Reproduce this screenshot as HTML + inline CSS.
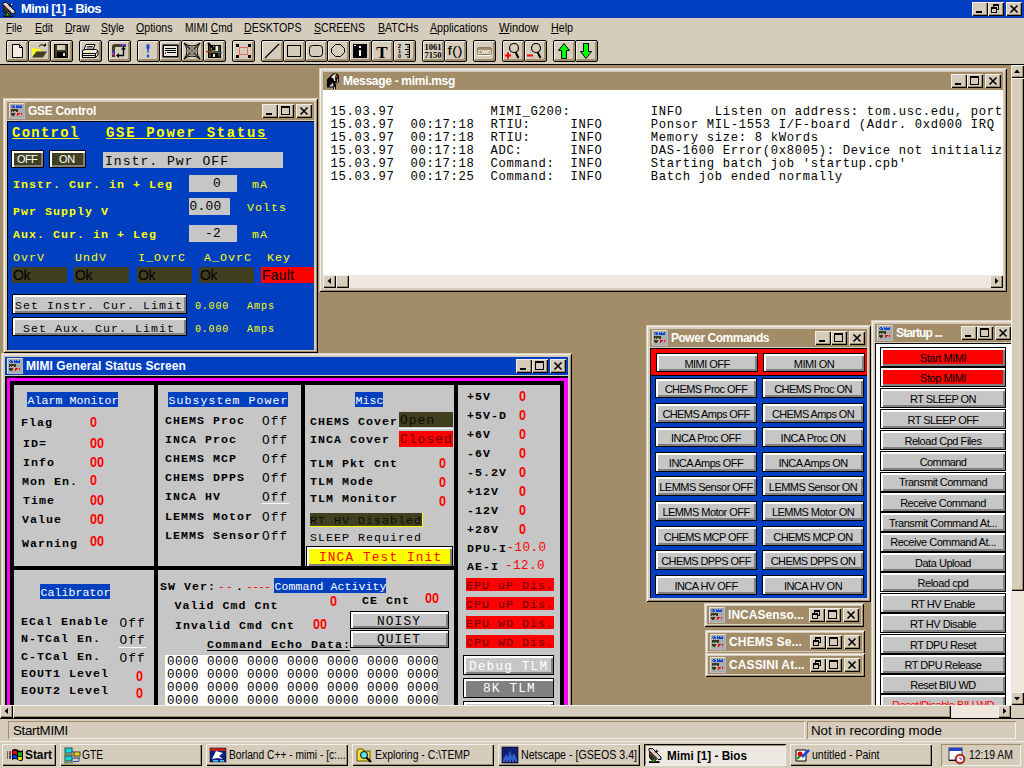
<!DOCTYPE html><html><head><meta charset="utf-8"><title>Mimi [1] - Bios</title><style>
html,body{margin:0;padding:0;}
body{width:1024px;height:768px;overflow:hidden;background:#A28D68;position:relative;font-family:"Liberation Sans",sans-serif;font-size:13px;color:#000;}
div{position:absolute;box-sizing:border-box;}
.t{white-space:pre;line-height:1;}
.win{background:#D5CCBB;box-shadow:inset 1px 1px #D5CCBB,inset -1px -1px #000,inset 2px 2px #F3EFE8,inset -2px -2px #A28D68;}
.tb{height:18px;color:#fff;font-weight:bold;font-size:12px;}
.cb{width:16px;height:14px;background:#D5CCBB;box-shadow:inset 1px 1px #F3EFE8,inset -1px -1px #000,inset -2px -2px #A28D68;}
.tbtn{width:23px;height:22px;background:#D5CCBB;border:1px solid #000;border-radius:2px;box-shadow:inset 1px 1px #F3EFE8,inset -2px -2px #A28D68;}
.mono{font-family:"Liberation Mono",monospace;}
.mb{font-family:"Liberation Mono",monospace;font-weight:bold;}
.y{color:#FFFF00;}
.r{color:#FF0000;}
.pbtn{background:#C6C6C6;border:1px solid #000;box-shadow:inset 2px 2px #fff,inset -2px -2px #808080;text-align:center;font-size:12px;white-space:pre;}
.sunk{box-shadow:inset 1px 1px #A28D68,inset -1px -1px #F3EFE8;}
.task{height:22px;background:#D5CCBB;box-shadow:inset 1px 1px #F3EFE8,inset -1px -1px #000,inset -2px -2px #A28D68;font-size:12px;white-space:pre;}
svg{position:absolute;left:0;top:0;overflow:visible;}
</style></head><body><div style="left:0px;top:0px;width:1024px;height:18px;background:#0040C0;"></div><svg width="18" height="18" style="left:0px;top:0px"><path d="M3 2.5 L6.5 2.5 L15 11 L15 13.5 L12 13.5 L3 4.5Z" fill="#D8D4CC" stroke="#000" stroke-width="1"/><path d="M3.5 5.5 L10.5 13 L9.5 14.5 L6 14.5 L3.5 11.5Z" fill="#505028" stroke="#000" stroke-width=".8"/><path d="M4 9 L8 13.5 M4 11.5 L6.5 14" stroke="#000" stroke-width="1"/><path d="M9.5 6.5 L12 4" stroke="#000" stroke-width="2.4"/><circle cx="11.6" cy="4.4" r=".8" fill="#fff"/><path d="M3 16 H13.500" stroke="#000" stroke-width="2"/><path d="M4 15.700 H12" stroke="#505028" stroke-width=".8"/><rect x="6.700" y="13.700" width="1.600" height="1.600" fill="#00FF00"/><rect x="3.800" y="6.800" width="1.500" height="1.500" fill="#FF0000"/></svg><div class="t" style="left:21px;top:2px;font:bold 13px 'Liberation Sans',sans-serif;line-height:13px;letter-spacing:-0.59px;color:#fff;">Mimi [1] - Bios</div><div class="cb" style="left:972px;top:2px;width:16px;height:14px;"><div style="left:4px;top:9px;width:6px;height:2px;background:#000"></div></div><div class="cb" style="left:988px;top:2px;width:16px;height:14px;"><div style="left:5px;top:2px;width:6px;height:6px;border:1px solid #000;border-top:2px solid #000"></div><div style="left:3px;top:5px;width:6px;height:6px;border:1px solid #000;border-top:2px solid #000;background:#D5CCBB"></div></div><div class="cb" style="left:1006px;top:2px;width:16px;height:14px;"><svg width="16" height="14"><path d="M4.5 3.5 L11.5 10.5 M11.5 3.5 L4.5 10.5" stroke="#000" stroke-width="1.6" fill="none"/></svg></div><div style="left:0px;top:18px;width:1024px;height:46px;background:#D5CCBB;"></div><div class="t" style="left:6px;top:22px;font:12.5px 'Liberation Sans',sans-serif;line-height:12.5px;transform-origin:0 0;transform:scaleX(0.794);"><u>F</u>ile</div><div class="t" style="left:34.5px;top:22px;font:12.5px 'Liberation Sans',sans-serif;line-height:12.5px;transform-origin:0 0;transform:scaleX(0.836);"><u>E</u>dit</div><div class="t" style="left:64.5px;top:22px;font:12.5px 'Liberation Sans',sans-serif;line-height:12.5px;transform-origin:0 0;transform:scaleX(0.840);"><u>D</u>raw</div><div class="t" style="left:101px;top:22px;font:12.5px 'Liberation Sans',sans-serif;line-height:12.5px;transform-origin:0 0;transform:scaleX(0.828);"><u>S</u>tyle</div><div class="t" style="left:136px;top:22px;font:12.5px 'Liberation Sans',sans-serif;line-height:12.5px;transform-origin:0 0;transform:scaleX(0.847);"><u>O</u>ptions</div><div class="t" style="left:184.5px;top:22px;font:12.5px 'Liberation Sans',sans-serif;line-height:12.5px;transform-origin:0 0;transform:scaleX(0.824);">MIMI <u>C</u>md</div><div class="t" style="left:244px;top:22px;font:12.5px 'Liberation Sans',sans-serif;line-height:12.5px;transform-origin:0 0;transform:scaleX(0.847);"><u>D</u>ESKTOPS</div><div class="t" style="left:314px;top:22px;font:12.5px 'Liberation Sans',sans-serif;line-height:12.5px;transform-origin:0 0;transform:scaleX(0.844);"><u>S</u>CREENS</div><div class="t" style="left:377.5px;top:22px;font:12.5px 'Liberation Sans',sans-serif;line-height:12.5px;transform-origin:0 0;transform:scaleX(0.849);"><u>B</u>ATCHs</div><div class="t" style="left:430px;top:22px;font:12.5px 'Liberation Sans',sans-serif;line-height:12.5px;transform-origin:0 0;transform:scaleX(0.853);"><u>A</u>pplications</div><div class="t" style="left:499px;top:22px;font:12.5px 'Liberation Sans',sans-serif;line-height:12.5px;transform-origin:0 0;transform:scaleX(0.888);"><u>W</u>indow</div><div class="t" style="left:550.5px;top:22px;font:12.5px 'Liberation Sans',sans-serif;line-height:12.5px;transform-origin:0 0;transform:scaleX(0.856);"><u>H</u>elp</div><div style="left:0px;top:64px;width:1024px;height:1px;background:#000;"></div><div class="tbtn" style="left:6px;top:40px;width:23px;height:22px;"><svg width="22" height="22" style="left:-1px;top:-1px"><path d="M6.5 4.5 H13.5 L16.5 7.5 V17.5 H6.5Z" fill="#F2ECE2" stroke="#000"/><path d="M13.5 4.5 V7.5 H16.5" fill="none" stroke="#000"/></svg></div><div class="tbtn" style="left:28px;top:40px;width:23px;height:22px;"><svg width="22" height="22" style="left:-1px;top:-1px"><path d="M4 8 L9 9 L13 9 L13 11 L8 11 L4 16Z" fill="#FFFF00"/><path d="M4 17.5 L8.5 11.5 H19 L15 17.5Z" fill="#404020"/><path d="M11 6.5 Q14 3 17 6.5" fill="none" stroke="#000"/><path d="M15 6 H18 V3Z" fill="#000"/></svg></div><div class="tbtn" style="left:50px;top:40px;width:23px;height:22px;"><svg width="22" height="22" style="left:-1px;top:-1px"><rect x="4.5" y="4.5" width="13" height="13" fill="#404020" stroke="#000"/><rect x="7" y="5" width="8" height="5" fill="#D5CCBB"/><rect x="7" y="12" width="9" height="5" fill="#000"/><rect x="13" y="13" width="2" height="3" fill="#E8E0D0"/></svg></div><div class="tbtn" style="left:79px;top:40px;width:23px;height:22px;"><svg width="22" height="22" style="left:-1px;top:-1px"><path d="M7 4.5 H16 L14 9.5 H5Z" fill="#fff" stroke="#000"/><path d="M8 6.5 H14 M7.5 8 H13.5" stroke="#000" stroke-width=".8"/><path d="M3.5 10.5 L6 9.5 H17 L19 11 V15 L16.5 17.5 H3.5Z" fill="#F2ECE2" stroke="#000"/><path d="M3.5 13.5 H16.5 L19 11.5 M16.5 13.5 V17.5" fill="none" stroke="#000"/><rect x="9" y="12" width="3" height="1" fill="#FFFF00"/><path d="M4 15.5 H16" stroke="#000"/></svg></div><div class="tbtn" style="left:108px;top:40px;width:23px;height:22px;"><svg width="22" height="22" style="left:-1px;top:-1px"><path d="M4 17 V7 Q4 4 7 4 H18 V7 H8 Q7 7 7 8 V17Z" fill="#404020"/><rect x="12" y="4" width="2" height="2" fill="#2040E0"/><rect x="14" y="4" width="2" height="2" fill="#E020C0"/><rect x="16" y="4" width="2" height="2" fill="#2040E0"/><rect x="4" y="11" width="2" height="2" fill="#2040E0"/><rect x="4" y="13" width="2" height="2" fill="#E020C0"/><path d="M10 15.5 H15.5 V9" fill="none" stroke="#000" stroke-width="1.4"/><path d="M8 15.5 L11 13 V18Z M15.5 6.5 L13 9.5 H18Z" fill="#000"/></svg></div><div class="tbtn" style="left:137px;top:40px;width:23px;height:22px;"><svg width="22" height="22" style="left:-1px;top:-1px"><path d="M9.500 5 Q11 3 12.500 5 V8 Q11.500 9 11.500 13 H10.500 Q10.500 9 9.500 8Z" fill="#1048E0"/><path d="M11 14 L12.500 16 L11 18 L9.500 16Z" fill="#1048E0"/></svg></div><div class="tbtn" style="left:159px;top:40px;width:23px;height:22px;"><svg width="22" height="22" style="left:-1px;top:-1px"><rect x="4.2" y="5.200" width="14.600" height="11.600" fill="#EDE8DF" stroke="#000" stroke-width="1.500"/><path d="M6 8.5 H17 M6 10.5 H17 M8 12.5 H17" stroke="#000"/><rect x="6" y="12" width="1" height="2" fill="#F00"/></svg></div><div class="tbtn" style="left:181px;top:40px;width:23px;height:22px;"><svg width="22" height="22" style="left:-1px;top:-1px"><path d="M3 3 Q11 9 19 3 Q13 11 19 19 Q11 13 3 19 Q9 11 3 3Z" fill="none" stroke="#000"/><path d="M3 3 L19 19 M19 3 L3 19 M5 4.5 Q11 11 5 17.5 M17 4.5 Q11 11 17 17.5 M4.5 5 Q11 11 17.5 5 M4.5 17 Q11 11 17.5 17 M7 6 Q11 11 7 16 M15 6 Q11 11 15 16 M6 7 Q11 11 16 7 M6 15 Q11 11 16 15" fill="none" stroke="#000" stroke-width=".45"/></svg></div><div class="tbtn" style="left:203px;top:40px;width:23px;height:22px;"><svg width="22" height="22" style="left:-1px;top:-1px"><rect x="5.5" y="5.5" width="12" height="12" fill="#404020" stroke="#000"/><rect x="8" y="6" width="7" height="5" fill="#EDE8DF"/><rect x="8" y="13" width="7" height="4" fill="#000"/><rect x="10" y="14" width="2" height="3" fill="#EDE8DF"/><path d="M5 3 L10 8" stroke="#000" stroke-width="2.2"/><path d="M7 10.5 H12.5 V5Z" fill="#000"/><rect x="3" y="11" width="3" height="1.3" fill="#F00"/><rect x="6" y="11.5" width="10" height="1.3" fill="#606030"/><rect x="16" y="12" width="3" height="1.3" fill="#2060E0"/></svg></div><div class="tbtn" style="left:232px;top:40px;width:23px;height:22px;"><svg width="22" height="22" style="left:-1px;top:-1px"><rect x="4" y="4" width="3" height="3" fill="#000"/><rect x="16" y="4" width="3" height="3" fill="#000"/><rect x="4" y="15" width="3" height="3" fill="#000"/><rect x="16" y="15" width="3" height="3" fill="#000"/><rect x="7.5" y="7.5" width="8" height="7" fill="none" stroke="#F00" stroke-dasharray="1 1"/></svg></div><div class="tbtn" style="left:261px;top:40px;width:23px;height:22px;"><svg width="22" height="22" style="left:-1px;top:-1px"><path d="M4 18 L18 4" stroke="#000" stroke-width="1.2"/></svg></div><div class="tbtn" style="left:283px;top:40px;width:23px;height:22px;"><svg width="22" height="22" style="left:-1px;top:-1px"><rect x="4.500" y="5.500" width="13" height="11" fill="none" stroke="#000"/></svg></div><div class="tbtn" style="left:305px;top:40px;width:23px;height:22px;"><svg width="22" height="22" style="left:-1px;top:-1px"><rect x="4.500" y="5.500" width="13" height="11" rx="3" fill="none" stroke="#000"/></svg></div><div class="tbtn" style="left:327px;top:40px;width:23px;height:22px;"><svg width="22" height="22" style="left:-1px;top:-1px"><path d="M8.500 4.500 H13.500 L17.500 8.500 V12.500 L13.500 16.500 H8.500 L4.500 12.500 V8.500Z" fill="none" stroke="#000"/></svg></div><div class="tbtn" style="left:349px;top:40px;width:23px;height:22px;"><svg width="22" height="22" style="left:-1px;top:-1px"><rect x="4" y="4" width="14" height="14" fill="#000"/><rect x="10" y="6" width="2" height="2" fill="#fff"/><rect x="10" y="10" width="2" height="6" fill="#fff"/><rect x="5" y="5" width="2" height="1" fill="#fff"/></svg></div><div class="tbtn" style="left:371px;top:40px;width:23px;height:22px;"><svg width="22" height="22" style="left:-1px;top:-1px"><text x="11" y="17.500" font-family="Liberation Serif,serif" font-weight="bold" font-size="17" text-anchor="middle" fill="#000">T</text></svg></div><div class="tbtn" style="left:393px;top:40px;width:23px;height:22px;"><svg width="22" height="22" style="left:-1px;top:-1px"><path d="M16.500 4 V18 M12 4.500 H16.500 M14 7 H16.500 M12 9.500 H16.500 M14 12 H16.500 M12 14.500 H16.500 M14 17 H16.500" stroke="#000" fill="none"/><text x="5" y="8" font-family="Liberation Sans,sans-serif" font-weight="bold" font-size="5.500" fill="#000">2</text><text x="5" y="13" font-family="Liberation Sans,sans-serif" font-weight="bold" font-size="5.500" fill="#000">1</text><text x="5" y="18" font-family="Liberation Sans,sans-serif" font-weight="bold" font-size="5.500" fill="#000">0</text></svg></div><div class="tbtn" style="left:422px;top:40px;width:23px;height:22px;"><svg width="22" height="22" style="left:-1px;top:-1px"><text x="11" y="10" font-family="Liberation Serif,serif" font-weight="bold" font-size="8.500" text-anchor="middle" fill="#000" textLength="17" lengthAdjust="spacingAndGlyphs">1061</text><text x="11" y="18" font-family="Liberation Serif,serif" font-weight="bold" font-size="8.500" text-anchor="middle" fill="#000" textLength="17" lengthAdjust="spacingAndGlyphs">7150</text></svg></div><div class="tbtn" style="left:444px;top:40px;width:23px;height:22px;"><svg width="22" height="22" style="left:-1px;top:-1px"><text x="11" y="15" font-family="Liberation Sans,sans-serif" font-size="13" text-anchor="middle" fill="#000" textLength="15" lengthAdjust="spacingAndGlyphs">f()</text></svg></div><div class="tbtn" style="left:473px;top:40px;width:23px;height:22px;"><svg width="22" height="22" style="left:-1px;top:-1px"><rect x="4.500" y="7.500" width="14" height="7" rx="1.500" fill="#A28D68" stroke="#8A7858"/><path d="M5 15.500 H18" stroke="#fff"/><text x="11.500" y="13.500" font-family="Liberation Sans,sans-serif" font-weight="bold" font-size="6" text-anchor="middle" fill="#fff">CMD</text></svg></div><div class="tbtn" style="left:502px;top:40px;width:23px;height:22px;"><svg width="22" height="22" style="left:-1px;top:-1px"><circle cx="12" cy="8" r="4.500" fill="none" stroke="#000" stroke-width="1.2"/><path d="M13.500 12 L16.500 18" stroke="#000" stroke-width="2"/><path d="M3 15.500 H9 M6 12.500 V18.500" stroke="#F00" stroke-width="2"/></svg></div><div class="tbtn" style="left:524px;top:40px;width:23px;height:22px;"><svg width="22" height="22" style="left:-1px;top:-1px"><circle cx="12" cy="8" r="4.500" fill="none" stroke="#000" stroke-width="1.2"/><path d="M13.500 12 L16.500 18" stroke="#000" stroke-width="2"/><path d="M3 15.500 H9" stroke="#F00" stroke-width="2"/></svg></div><div class="tbtn" style="left:553px;top:40px;width:23px;height:22px;"><svg width="22" height="22" style="left:-1px;top:-1px"><path d="M11 3.500 L16.500 10.500 H13.500 V18.500 H8.500 V10.500 H5.500Z" fill="#00FF00" stroke="#000"/></svg></div><div class="tbtn" style="left:575px;top:40px;width:23px;height:22px;"><svg width="22" height="22" style="left:-1px;top:-1px"><path d="M11 18.500 L16.500 11.500 H13.500 V3.500 H8.500 V11.500 H5.500Z" fill="#00FF00" stroke="#000"/></svg></div><div style="left:0;top:0;width:1011px;height:705px;overflow:hidden;"><div class="win" style="left:3px;top:98px;width:315px;height:255px;"></div><div class="tb" style="left:7px;top:102px;width:307px;height:18px;background:#A28D68;"></div><svg width="16" height="16" style="left:9px;top:103px" shape-rendering="crispEdges"><rect width="16" height="16" fill="#B4BAC4"/><rect width="15" height="15" fill="#E6DFD0"/><rect x="1" y="1" width="14" height="14" fill="#ABABAB"/><rect x="3" y="2" width="2" height="1" fill="#1048D8"/><rect x="2" y="3" width="1" height="1" fill="#1048D8"/><rect x="4" y="3" width="2" height="1" fill="#1048D8"/><rect x="3" y="4" width="2" height="1" fill="#1048D8"/><rect x="5" y="3" width="1" height="2" fill="#1048D8"/><rect x="7" y="2" width="1" height="3" fill="#1048D8"/><rect x="8" y="3" width="1" height="2" fill="#1048D8"/><rect x="9" y="2" width="1" height="3" fill="#1048D8"/><rect x="10" y="3" width="1" height="2" fill="#1048D8"/><rect x="11" y="3" width="2" height="2" fill="#1048D8"/><rect x="12" y="2" width="1" height="1" fill="#1048D8"/><rect x="2" y="6" width="7" height="2" fill="#3A3A18"/><rect x="2" y="8" width="1" height="1" fill="#3A3A18"/><rect x="4" y="8" width="1" height="1" fill="#3A3A18"/><rect x="7" y="8" width="2" height="1" fill="#3A3A18"/><rect x="2" y="10" width="4" height="2" fill="#3A3A18"/><rect x="3" y="12" width="2" height="1" fill="#3A3A18"/><rect x="8" y="10" width="3" height="1" fill="#FF0000"/><rect x="8" y="11" width="2" height="1" fill="#FF0000"/><rect x="8" y="12" width="1" height="1" fill="#FF0000"/><rect x="12" y="10" width="1" height="2" fill="#FF0000"/></svg><div class="t" style="left:28px;top:105px;font:bold 12px 'Liberation Sans',sans-serif;line-height:12px;letter-spacing:-0.30px;color:#fff;">GSE Control</div><div class="cb" style="left:296px;top:104px;width:16px;height:14px;"><svg width="16" height="14"><path d="M4.5 3.5 L11.5 10.5 M11.5 3.5 L4.5 10.5" stroke="#000" stroke-width="1.6" fill="none"/></svg></div><div class="cb" style="left:278px;top:104px;width:16px;height:14px;"><div style="left:3px;top:2px;width:9px;height:9px;border:1px solid #000;border-top:2px solid #000"></div></div><div class="cb" style="left:262px;top:104px;width:16px;height:14px;"><div style="left:4px;top:9px;width:6px;height:2px;background:#000"></div></div><div style="left:7px;top:121px;width:307px;height:229px;background:#000;"></div><div style="left:8px;top:122px;width:306px;height:228px;background:#0040C0;"></div><div class="t" style="left:12px;top:127.3px;font:bold 13.9px 'Liberation Mono',monospace;line-height:13.9px;letter-spacing:1.31px;color:#FFFF00;text-decoration:underline;">Control</div><div class="t" style="left:106px;top:127.3px;font:bold 13.9px 'Liberation Mono',monospace;line-height:13.9px;letter-spacing:1.73px;color:#FFFF00;text-decoration:underline;">GSE Power Status</div><div style="left:11px;top:150px;width:33px;height:18px;background:#404020;border:1px solid #000;box-shadow:inset 2px 2px #fff,inset -2px -2px #808080;"></div><div class="t" style="left:17px;top:154px;font:11px 'Liberation Sans',sans-serif;line-height:11px;letter-spacing:-0.66px;color:#fff;">OFF</div><div style="left:49px;top:150px;width:37px;height:18px;background:#404020;border:1px solid #000;box-shadow:inset 2px 2px #fff,inset -2px -2px #808080;"></div><div class="t" style="left:59px;top:154px;font:11px 'Liberation Sans',sans-serif;line-height:11px;letter-spacing:-0.25px;color:#fff;">ON</div><div style="left:103px;top:152px;width:180px;height:16px;background:#C6C6C6;"></div><div class="t" style="left:105px;top:155.0px;font:13.1px 'Liberation Mono',monospace;line-height:13.1px;letter-spacing:1.00px;color:#000;">Instr. Pwr OFF</div><div class="t" style="left:13px;top:179.1px;font:bold 11.6px 'Liberation Mono',monospace;line-height:11.6px;letter-spacing:1.04px;color:#FFFF00;">Instr. Cur. in + Leg</div><div class="t" style="left:13px;top:206.1px;font:bold 11.6px 'Liberation Mono',monospace;line-height:11.6px;letter-spacing:1.04px;color:#FFFF00;">Pwr Supply V</div><div class="t" style="left:13px;top:229.1px;font:bold 11.6px 'Liberation Mono',monospace;line-height:11.6px;letter-spacing:1.04px;color:#FFFF00;">Aux. Cur. in + Leg</div><div style="left:189px;top:175px;width:48px;height:17px;background:#C6C6C6;"></div><div class="t" style="left:213px;top:178.1px;font:12.9px 'Liberation Mono',monospace;line-height:12.9px;letter-spacing:0.26px;color:#000;">0</div><div style="left:189px;top:198px;width:41px;height:17px;background:#C6C6C6;"></div><div class="t" style="left:189.5px;top:201.1px;font:12.9px 'Liberation Mono',monospace;line-height:12.9px;letter-spacing:0.26px;color:#000;">0.00</div><div style="left:189px;top:225px;width:48px;height:17px;background:#C6C6C6;"></div><div class="t" style="left:205px;top:228.1px;font:12.9px 'Liberation Mono',monospace;line-height:12.9px;letter-spacing:0.26px;color:#000;">-2</div><div class="t" style="left:252px;top:179.1px;font:11.6px 'Liberation Mono',monospace;line-height:11.6px;letter-spacing:1.04px;color:#FFFF00;">mA</div><div class="t" style="left:247px;top:202.1px;font:11.6px 'Liberation Mono',monospace;line-height:11.6px;letter-spacing:1.04px;color:#FFFF00;">Volts</div><div class="t" style="left:252px;top:229.1px;font:11.6px 'Liberation Mono',monospace;line-height:11.6px;letter-spacing:1.04px;color:#FFFF00;">mA</div><div class="t" style="left:13px;top:252.1px;font:11.6px 'Liberation Mono',monospace;line-height:11.6px;letter-spacing:1.04px;color:#FFFF00;">OvrV</div><div class="t" style="left:75px;top:252.1px;font:11.6px 'Liberation Mono',monospace;line-height:11.6px;letter-spacing:1.04px;color:#FFFF00;">UndV</div><div class="t" style="left:138px;top:252.1px;font:11.6px 'Liberation Mono',monospace;line-height:11.6px;letter-spacing:1.04px;color:#FFFF00;">I_OvrC</div><div class="t" style="left:204px;top:252.1px;font:11.6px 'Liberation Mono',monospace;line-height:11.6px;letter-spacing:1.04px;color:#FFFF00;">A_OvrC</div><div class="t" style="left:267px;top:252.1px;font:11.6px 'Liberation Mono',monospace;line-height:11.6px;letter-spacing:1.04px;color:#FFFF00;">Key</div><div style="left:12px;top:267px;width:55px;height:16px;background:#404020;"></div><div class="t" style="left:13px;top:268px;font:14px 'Liberation Sans',sans-serif;line-height:14px;letter-spacing:-0.44px;">Ok</div><div style="left:74px;top:267px;width:55px;height:16px;background:#404020;"></div><div class="t" style="left:75px;top:268px;font:14px 'Liberation Sans',sans-serif;line-height:14px;letter-spacing:-0.44px;">Ok</div><div style="left:137px;top:267px;width:55px;height:16px;background:#404020;"></div><div class="t" style="left:138px;top:268px;font:14px 'Liberation Sans',sans-serif;line-height:14px;letter-spacing:-0.44px;">Ok</div><div style="left:199px;top:267px;width:55px;height:16px;background:#404020;"></div><div class="t" style="left:200px;top:268px;font:14px 'Liberation Sans',sans-serif;line-height:14px;letter-spacing:-0.44px;">Ok</div><div style="left:261px;top:267px;width:53px;height:16px;background:#FF0000;"></div><div class="t" style="left:262px;top:268px;font:14px 'Liberation Sans',sans-serif;line-height:14px;letter-spacing:0.18px;">Fault</div><div style="left:12px;top:294px;width:175px;height:20px;background:#C6C6C6;border:1px solid #000;box-shadow:inset 2px 2px #fff,inset -2px -2px #808080;"></div><div class="t" style="left:15px;top:300.1px;font:11.6px 'Liberation Mono',monospace;line-height:11.6px;letter-spacing:1.04px;color:#000;">Set Instr. Cur. Limit</div><div style="left:12px;top:317px;width:175px;height:19px;background:#C6C6C6;border:1px solid #000;box-shadow:inset 2px 2px #fff,inset -2px -2px #808080;"></div><div class="t" style="left:23px;top:323.1px;font:11.6px 'Liberation Mono',monospace;line-height:11.6px;letter-spacing:1.04px;color:#000;">Set Aux. Cur. Limit</div><div class="t" style="left:195px;top:302.3px;font:10.0px 'Liberation Mono',monospace;line-height:10.0px;letter-spacing:0.80px;color:#FFFF00;">0.000</div><div class="t" style="left:247px;top:302.3px;font:10.0px 'Liberation Mono',monospace;line-height:10.0px;letter-spacing:1.00px;color:#FFFF00;">Amps</div><div class="t" style="left:195px;top:325.3px;font:10.0px 'Liberation Mono',monospace;line-height:10.0px;letter-spacing:0.80px;color:#FFFF00;">0.000</div><div class="t" style="left:247px;top:325.3px;font:10.0px 'Liberation Mono',monospace;line-height:10.0px;letter-spacing:1.00px;color:#FFFF00;">Amps</div><div class="win" style="left:319px;top:68px;width:688px;height:224px;"></div><div class="tb" style="left:323px;top:72px;width:680px;height:18px;background:#A28D68;"></div><div class="t" style="left:343px;top:75px;font:bold 12px 'Liberation Sans',sans-serif;line-height:12px;letter-spacing:-0.30px;color:#fff;">Message - mimi.msg</div><div class="cb" style="left:985px;top:74px;width:16px;height:14px;"><svg width="16" height="14"><path d="M4.5 3.5 L11.5 10.5 M11.5 3.5 L4.5 10.5" stroke="#000" stroke-width="1.6" fill="none"/></svg></div><div class="cb" style="left:967px;top:74px;width:16px;height:14px;"><div style="left:3px;top:2px;width:9px;height:9px;border:1px solid #000;border-top:2px solid #000"></div></div><div class="cb" style="left:951px;top:74px;width:16px;height:14px;"><div style="left:4px;top:9px;width:6px;height:2px;background:#000"></div></div><svg width="14" height="18" style="left:327px;top:73px"><path d="M0 6.500 L6 0.500 H10 L12 2.500 V9 L9 11.500 V16 H6 V14.500 H0Z" fill="#000"/><path d="M4 4.200 L7 1.200 H9 L9.500 2.500 L8 5 L8.500 8 H7 L6.500 5.500Z" fill="#E8E4DA"/><circle cx="9.300" cy="3.600" r="1.500" fill="#405018"/><circle cx="9.300" cy="3.600" r=".9" fill="#FF0000"/><path d="M10.500 6 V9 L8.500 11" fill="none" stroke="#B4B4B4"/><path d="M2 13.500 L6 9.500 L6.500 13.500Z" fill="#C8C8C8"/><rect x="7" y="14" width=".8" height="2" fill="#fff"/></svg><div style="left:323px;top:90px;width:680px;height:185px;background:#fff;"></div><div style="left:323px;top:275px;width:680px;height:13px;background:#EEE8DE;"></div><div style="left:323px;top:90px;width:680px;height:185px;overflow:hidden;"><div class="t" style="left:7.5px;top:15.5px;font:12.2px 'Liberation Mono',monospace;line-height:12.2px;letter-spacing:0.69px;">15.03.97            MIMI_G200:          INFO    Listen on address: tom.usc.edu, port</div><div class="t" style="left:7.5px;top:28.5px;font:12.2px 'Liberation Mono',monospace;line-height:12.2px;letter-spacing:0.69px;">15.03.97  00:17:18  RTIU:     INFO      Ponsor MIL-1553 I/F-board (Addr. 0xd000 IRQ </div><div class="t" style="left:7.5px;top:41.5px;font:12.2px 'Liberation Mono',monospace;line-height:12.2px;letter-spacing:0.69px;">15.03.97  00:17:18  RTIU:     INFO      Memory size: 8 kWords</div><div class="t" style="left:7.5px;top:54.5px;font:12.2px 'Liberation Mono',monospace;line-height:12.2px;letter-spacing:0.69px;">15.03.97  00:17:18  ADC:      INFO      DAS-1600 Error(0x8005): Device not initializ</div><div class="t" style="left:7.5px;top:67.5px;font:12.2px 'Liberation Mono',monospace;line-height:12.2px;letter-spacing:0.69px;">15.03.97  00:17:18  Command:  INFO      Starting batch job 'startup.cpb'</div><div class="t" style="left:7.5px;top:80.5px;font:12.2px 'Liberation Mono',monospace;line-height:12.2px;letter-spacing:0.69px;">15.03.97  00:17:25  Command:  INFO      Batch job ended normally</div></div><div style="left:323px;top:275px;width:13px;height:13px;background:#D5CCBB;box-shadow:inset 1px 1px #F3EFE8,inset -1px -1px #000,inset -2px -2px #A28D68;"><svg width="13" height="13"><path d="M8 3 L8 9 L4.5 6Z" fill="#000"/></svg></div><div style="left:990px;top:275px;width:13px;height:13px;background:#D5CCBB;box-shadow:inset 1px 1px #F3EFE8,inset -1px -1px #000,inset -2px -2px #A28D68;"><svg width="13" height="13"><path d="M5 3 L5 9 L8.5 6Z" fill="#000"/></svg></div><div style="left:336px;top:275px;width:13px;height:13px;background:#D5CCBB;box-shadow:inset 1px 1px #F3EFE8,inset -1px -1px #000,inset -2px -2px #A28D68;"></div><div class="win" style="left:1px;top:353px;width:571px;height:400px;"></div><div class="tb" style="left:5px;top:357px;width:563px;height:18px;background:#0040C0;"></div><svg width="16" height="16" style="left:7px;top:358px" shape-rendering="crispEdges"><rect width="16" height="16" fill="#B4BAC4"/><rect width="15" height="15" fill="#E6DFD0"/><rect x="1" y="1" width="14" height="14" fill="#ABABAB"/><rect x="3" y="2" width="2" height="1" fill="#1048D8"/><rect x="2" y="3" width="1" height="1" fill="#1048D8"/><rect x="4" y="3" width="2" height="1" fill="#1048D8"/><rect x="3" y="4" width="2" height="1" fill="#1048D8"/><rect x="5" y="3" width="1" height="2" fill="#1048D8"/><rect x="7" y="2" width="1" height="3" fill="#1048D8"/><rect x="8" y="3" width="1" height="2" fill="#1048D8"/><rect x="9" y="2" width="1" height="3" fill="#1048D8"/><rect x="10" y="3" width="1" height="2" fill="#1048D8"/><rect x="11" y="3" width="2" height="2" fill="#1048D8"/><rect x="12" y="2" width="1" height="1" fill="#1048D8"/><rect x="2" y="6" width="7" height="2" fill="#3A3A18"/><rect x="2" y="8" width="1" height="1" fill="#3A3A18"/><rect x="4" y="8" width="1" height="1" fill="#3A3A18"/><rect x="7" y="8" width="2" height="1" fill="#3A3A18"/><rect x="2" y="10" width="4" height="2" fill="#3A3A18"/><rect x="3" y="12" width="2" height="1" fill="#3A3A18"/><rect x="8" y="10" width="3" height="1" fill="#FF0000"/><rect x="8" y="11" width="2" height="1" fill="#FF0000"/><rect x="8" y="12" width="1" height="1" fill="#FF0000"/><rect x="12" y="10" width="1" height="2" fill="#FF0000"/></svg><div class="t" style="left:26px;top:360px;font:bold 12px 'Liberation Sans',sans-serif;line-height:12px;letter-spacing:0.07px;color:#fff;">MIMI General Status Screen</div><div class="cb" style="left:550px;top:359px;width:16px;height:14px;"><svg width="16" height="14"><path d="M4.5 3.5 L11.5 10.5 M11.5 3.5 L4.5 10.5" stroke="#000" stroke-width="1.6" fill="none"/></svg></div><div class="cb" style="left:532px;top:359px;width:16px;height:14px;"><div style="left:3px;top:2px;width:9px;height:9px;border:1px solid #000;border-top:2px solid #000"></div></div><div class="cb" style="left:516px;top:359px;width:16px;height:14px;"><div style="left:4px;top:9px;width:6px;height:2px;background:#000"></div></div><div style="left:5px;top:376px;width:563px;height:340px;background:#000;"></div><div style="left:7px;top:378px;width:561px;height:340px;background:#FF00FF;"></div><div style="left:10px;top:381px;width:554px;height:340px;background:#000;"></div><div style="left:14px;top:385px;width:546px;height:340px;background:#C6C6C6;"></div><div style="left:154px;top:381px;width:4px;height:340px;background:#000;"></div><div style="left:301px;top:381px;width:4px;height:189px;background:#000;"></div><div style="left:454px;top:381px;width:4px;height:340px;background:#000;"></div><div style="left:10px;top:566px;width:448px;height:4px;background:#000;"></div><div style="left:27px;top:392px;width:91px;height:15px;background:#0040C0;"></div><div class="t" style="left:27.5px;top:395.1px;font:11.6px 'Liberation Mono',monospace;line-height:11.6px;letter-spacing:0.04px;color:#fff;">Alarm Monitor</div><div class="t" style="left:21px;top:417.1px;font:bold 11.6px 'Liberation Mono',monospace;line-height:11.6px;letter-spacing:1.04px;color:#000;">Flag</div><div class="t" style="left:90px;top:415.1px;font:bold 14px 'Liberation Sans',sans-serif;line-height:14px;color:#FF0000;transform:scaleX(0.9);transform-origin:0 0;">0</div><div class="t" style="left:23px;top:438.1px;font:bold 11.6px 'Liberation Mono',monospace;line-height:11.6px;letter-spacing:1.04px;color:#000;">ID=</div><div class="t" style="left:90px;top:436.1px;font:bold 14px 'Liberation Sans',sans-serif;line-height:14px;color:#FF0000;transform:scaleX(0.9);transform-origin:0 0;">00</div><div class="t" style="left:23px;top:457.1px;font:bold 11.6px 'Liberation Mono',monospace;line-height:11.6px;letter-spacing:1.04px;color:#000;">Info</div><div class="t" style="left:90px;top:455.1px;font:bold 14px 'Liberation Sans',sans-serif;line-height:14px;color:#FF0000;transform:scaleX(0.9);transform-origin:0 0;">00</div><div class="t" style="left:22px;top:476.1px;font:bold 11.6px 'Liberation Mono',monospace;line-height:11.6px;letter-spacing:1.04px;color:#000;">Mon En.</div><div class="t" style="left:90px;top:473.1px;font:bold 14px 'Liberation Sans',sans-serif;line-height:14px;color:#FF0000;transform:scaleX(0.9);transform-origin:0 0;">0</div><div class="t" style="left:23px;top:495.1px;font:bold 11.6px 'Liberation Mono',monospace;line-height:11.6px;letter-spacing:1.04px;color:#000;">Time</div><div class="t" style="left:90px;top:493.1px;font:bold 14px 'Liberation Sans',sans-serif;line-height:14px;color:#FF0000;transform:scaleX(0.9);transform-origin:0 0;">00</div><div class="t" style="left:22px;top:514.1px;font:bold 11.6px 'Liberation Mono',monospace;line-height:11.6px;letter-spacing:1.04px;color:#000;">Value</div><div class="t" style="left:90px;top:512.1px;font:bold 14px 'Liberation Sans',sans-serif;line-height:14px;color:#FF0000;transform:scaleX(0.9);transform-origin:0 0;">00</div><div class="t" style="left:22px;top:538.1px;font:bold 11.6px 'Liberation Mono',monospace;line-height:11.6px;letter-spacing:1.04px;color:#000;">Warning</div><div class="t" style="left:90px;top:534.1px;font:bold 14px 'Liberation Sans',sans-serif;line-height:14px;color:#FF0000;transform:scaleX(0.9);transform-origin:0 0;">00</div><div style="left:168px;top:392px;width:120px;height:15px;background:#0040C0;"></div><div class="t" style="left:168.5px;top:395.1px;font:11.6px 'Liberation Mono',monospace;line-height:11.6px;letter-spacing:1.04px;color:#fff;">Subsystem Power</div><div class="t" style="left:165px;top:415.1px;font:bold 11.6px 'Liberation Mono',monospace;line-height:11.6px;letter-spacing:1.04px;color:#000;">CHEMS Proc</div><div class="t" style="left:262px;top:416.2px;font:12.8px 'Liberation Mono',monospace;line-height:12.8px;letter-spacing:1.12px;color:#000;">Off</div><div class="t" style="left:165px;top:434.1px;font:bold 11.6px 'Liberation Mono',monospace;line-height:11.6px;letter-spacing:1.04px;color:#000;">INCA Proc</div><div class="t" style="left:262px;top:435.2px;font:12.8px 'Liberation Mono',monospace;line-height:12.8px;letter-spacing:1.12px;color:#000;">Off</div><div class="t" style="left:165px;top:453.1px;font:bold 11.6px 'Liberation Mono',monospace;line-height:11.6px;letter-spacing:1.04px;color:#000;">CHEMS MCP</div><div class="t" style="left:262px;top:454.2px;font:12.8px 'Liberation Mono',monospace;line-height:12.8px;letter-spacing:1.12px;color:#000;">Off</div><div class="t" style="left:165px;top:472.1px;font:bold 11.6px 'Liberation Mono',monospace;line-height:11.6px;letter-spacing:1.04px;color:#000;">CHEMS DPPS</div><div class="t" style="left:262px;top:473.2px;font:12.8px 'Liberation Mono',monospace;line-height:12.8px;letter-spacing:1.12px;color:#000;">Off</div><div class="t" style="left:165px;top:491.1px;font:bold 11.6px 'Liberation Mono',monospace;line-height:11.6px;letter-spacing:1.04px;color:#000;">INCA HV</div><div class="t" style="left:262px;top:492.2px;font:12.8px 'Liberation Mono',monospace;line-height:12.8px;letter-spacing:1.12px;color:#000;">Off</div><div class="t" style="left:165px;top:511.1px;font:bold 11.6px 'Liberation Mono',monospace;line-height:11.6px;letter-spacing:1.04px;color:#000;">LEMMS Motor</div><div class="t" style="left:262px;top:512.2px;font:12.8px 'Liberation Mono',monospace;line-height:12.8px;letter-spacing:1.12px;color:#000;">Off</div><div class="t" style="left:165px;top:530.1px;font:bold 11.6px 'Liberation Mono',monospace;line-height:11.6px;letter-spacing:1.04px;color:#000;">LEMMS Sensor</div><div class="t" style="left:262px;top:531.2px;font:12.8px 'Liberation Mono',monospace;line-height:12.8px;letter-spacing:1.12px;color:#000;">Off</div><div style="left:262px;top:503px;width:27px;height:1px;background:#fff;"></div><div style="left:355px;top:392px;width:28px;height:15px;background:#0040C0;"></div><div class="t" style="left:355.5px;top:395.1px;font:11.6px 'Liberation Mono',monospace;line-height:11.6px;letter-spacing:0.04px;color:#fff;">Misc</div><div class="t" style="left:310px;top:416.1px;font:bold 11.6px 'Liberation Mono',monospace;line-height:11.6px;letter-spacing:1.04px;color:#000;">CHEMS Cover</div><div class="t" style="left:310px;top:434.1px;font:bold 11.6px 'Liberation Mono',monospace;line-height:11.6px;letter-spacing:1.04px;color:#000;">INCA Cover</div><div style="left:399px;top:412px;width:54px;height:15px;background:#404020;"></div><div class="t" style="left:400px;top:415.2px;font:12.8px 'Liberation Mono',monospace;line-height:12.8px;letter-spacing:1.12px;color:#0C0C04;">Open</div><div style="left:399px;top:428px;width:54px;height:1px;background:#fff;"></div><div style="left:399px;top:431px;width:54px;height:16px;background:#FF0000;"></div><div class="t" style="left:400px;top:434.2px;font:12.8px 'Liberation Mono',monospace;line-height:12.8px;letter-spacing:1.12px;color:#680000;">Closed</div><div class="t" style="left:310px;top:458.1px;font:bold 11.6px 'Liberation Mono',monospace;line-height:11.6px;letter-spacing:1.04px;color:#000;">TLM Pkt Cnt</div><div class="t" style="left:439px;top:456.1px;font:bold 14px 'Liberation Sans',sans-serif;line-height:14px;color:#FF0000;transform:scaleX(0.9);transform-origin:0 0;">0</div><div class="t" style="left:310px;top:476.1px;font:bold 11.6px 'Liberation Mono',monospace;line-height:11.6px;letter-spacing:1.04px;color:#000;">TLM Mode</div><div class="t" style="left:439px;top:475.1px;font:bold 14px 'Liberation Sans',sans-serif;line-height:14px;color:#FF0000;transform:scaleX(0.9);transform-origin:0 0;">0</div><div class="t" style="left:310px;top:493.1px;font:bold 11.6px 'Liberation Mono',monospace;line-height:11.6px;letter-spacing:1.04px;color:#000;">TLM Monitor</div><div class="t" style="left:439px;top:494.1px;font:bold 14px 'Liberation Sans',sans-serif;line-height:14px;color:#FF0000;transform:scaleX(0.9);transform-origin:0 0;">0</div><div style="left:310px;top:513px;width:113px;height:14px;background:#404020;border-right:1px solid #FFFF00;border-bottom:1px solid #FFFF00;"></div><div class="t" style="left:310px;top:515.1px;font:11.6px 'Liberation Mono',monospace;line-height:11.6px;letter-spacing:1.04px;color:#0C0C04;">RT HV Disabled</div><div class="t" style="left:310px;top:532.1px;font:11.6px 'Liberation Mono',monospace;line-height:11.6px;letter-spacing:1.04px;color:#000;">SLEEP Required</div><div style="left:306px;top:546px;width:147px;height:21px;background:#FFFF00;border:1px solid #000;box-shadow:inset 2px 2px #fff,inset -2px -2px #808080;"></div><div class="t" style="left:319px;top:552.2px;font:12.8px 'Liberation Mono',monospace;line-height:12.8px;letter-spacing:1.12px;color:#FF0000;">INCA Test Init</div><div class="t" style="left:467px;top:391.1px;font:bold 11.6px 'Liberation Mono',monospace;line-height:11.6px;letter-spacing:1.04px;color:#000;">+5V</div><div class="t" style="left:519px;top:389.1px;font:bold 14px 'Liberation Sans',sans-serif;line-height:14px;color:#FF0000;transform:scaleX(0.9);transform-origin:0 0;">0</div><div class="t" style="left:467px;top:410.1px;font:bold 11.6px 'Liberation Mono',monospace;line-height:11.6px;letter-spacing:1.04px;color:#000;">+5V-D</div><div class="t" style="left:519px;top:408.1px;font:bold 14px 'Liberation Sans',sans-serif;line-height:14px;color:#FF0000;transform:scaleX(0.9);transform-origin:0 0;">0</div><div class="t" style="left:467px;top:429.1px;font:bold 11.6px 'Liberation Mono',monospace;line-height:11.6px;letter-spacing:1.04px;color:#000;">+6V</div><div class="t" style="left:519px;top:427.1px;font:bold 14px 'Liberation Sans',sans-serif;line-height:14px;color:#FF0000;transform:scaleX(0.9);transform-origin:0 0;">0</div><div class="t" style="left:467px;top:448.1px;font:bold 11.6px 'Liberation Mono',monospace;line-height:11.6px;letter-spacing:1.04px;color:#000;">-6V</div><div class="t" style="left:519px;top:446.1px;font:bold 14px 'Liberation Sans',sans-serif;line-height:14px;color:#FF0000;transform:scaleX(0.9);transform-origin:0 0;">0</div><div class="t" style="left:467px;top:467.1px;font:bold 11.6px 'Liberation Mono',monospace;line-height:11.6px;letter-spacing:1.04px;color:#000;">-5.2V</div><div class="t" style="left:519px;top:465.1px;font:bold 14px 'Liberation Sans',sans-serif;line-height:14px;color:#FF0000;transform:scaleX(0.9);transform-origin:0 0;">0</div><div class="t" style="left:467px;top:486.1px;font:bold 11.6px 'Liberation Mono',monospace;line-height:11.6px;letter-spacing:1.04px;color:#000;">+12V</div><div class="t" style="left:519px;top:484.1px;font:bold 14px 'Liberation Sans',sans-serif;line-height:14px;color:#FF0000;transform:scaleX(0.9);transform-origin:0 0;">0</div><div class="t" style="left:467px;top:505.1px;font:bold 11.6px 'Liberation Mono',monospace;line-height:11.6px;letter-spacing:1.04px;color:#000;">-12V</div><div class="t" style="left:519px;top:503.1px;font:bold 14px 'Liberation Sans',sans-serif;line-height:14px;color:#FF0000;transform:scaleX(0.9);transform-origin:0 0;">0</div><div class="t" style="left:467px;top:524.1px;font:bold 11.6px 'Liberation Mono',monospace;line-height:11.6px;letter-spacing:1.04px;color:#000;">+28V</div><div class="t" style="left:519px;top:522.1px;font:bold 14px 'Liberation Sans',sans-serif;line-height:14px;color:#FF0000;transform:scaleX(0.9);transform-origin:0 0;">0</div><div class="t" style="left:467px;top:543.1px;font:bold 11.6px 'Liberation Mono',monospace;line-height:11.6px;letter-spacing:1.04px;color:#000;">DPU-I</div><div class="t" style="left:506.5px;top:542.3px;font:12.6px 'Liberation Mono',monospace;line-height:12.6px;letter-spacing:0.44px;color:#FF0000;">-10.0</div><div class="t" style="left:467px;top:561.1px;font:bold 11.6px 'Liberation Mono',monospace;line-height:11.6px;letter-spacing:1.04px;color:#000;">AE-I</div><div class="t" style="left:505px;top:560.3px;font:12.6px 'Liberation Mono',monospace;line-height:12.6px;letter-spacing:0.44px;color:#FF0000;">-12.0</div><div style="left:466px;top:578px;width:88px;height:13px;background:#FF0000;"></div><div class="t" style="left:466px;top:580.1px;font:11.6px 'Liberation Mono',monospace;line-height:11.6px;letter-spacing:1.04px;color:#680000;">EPU uP Dis.</div><div style="left:466px;top:597px;width:88px;height:13px;background:#FF0000;"></div><div class="t" style="left:466px;top:599.1px;font:11.6px 'Liberation Mono',monospace;line-height:11.6px;letter-spacing:1.04px;color:#680000;">CPU uP Dis.</div><div style="left:466px;top:616px;width:88px;height:13px;background:#FF0000;"></div><div class="t" style="left:466px;top:618.1px;font:11.6px 'Liberation Mono',monospace;line-height:11.6px;letter-spacing:1.04px;color:#680000;">EPU WD Dis.</div><div style="left:466px;top:635px;width:88px;height:13px;background:#FF0000;"></div><div class="t" style="left:466px;top:637.1px;font:11.6px 'Liberation Mono',monospace;line-height:11.6px;letter-spacing:1.04px;color:#680000;">CPU WD Dis.</div><div style="left:463px;top:655px;width:91px;height:20px;background:#C6C6C6;border:1px solid #000;box-shadow:inset 2px 2px #fff,inset -2px -2px #808080;overflow:hidden;"><div class="t" style="left:5px;top:5.2px;font:12.8px 'Liberation Mono',monospace;line-height:12.8px;letter-spacing:1.12px;color:#fff;">Debug TLM</div></div><div style="left:463px;top:678px;width:91px;height:20px;background:#808080;border:1px solid #000;box-shadow:inset 2px 2px #fff,inset -2px -2px #808080;overflow:hidden;"><div class="t" style="left:19px;top:4.2px;font:12.8px 'Liberation Mono',monospace;line-height:12.8px;letter-spacing:1.12px;color:#fff;">8K TLM</div></div><div style="left:463px;top:701px;width:91px;height:20px;background:#C6C6C6;border:1px solid #000;box-shadow:inset 2px 2px #fff,inset -2px -2px #808080;overflow:hidden;"><div class="t" style="left:-464px;top:-711.8px;font:12.8px 'Liberation Mono',monospace;line-height:12.8px;letter-spacing:0.00px;color:#fff;"></div></div><div style="left:40px;top:584px;width:70px;height:15px;background:#0040C0;"></div><div class="t" style="left:40.5px;top:587.1px;font:11.6px 'Liberation Mono',monospace;line-height:11.6px;letter-spacing:0.04px;color:#fff;">Calibrator</div><div class="t" style="left:21px;top:616.1px;font:bold 11.6px 'Liberation Mono',monospace;line-height:11.6px;letter-spacing:1.04px;color:#000;">ECal Enable</div><div class="t" style="left:119.5px;top:618.2px;font:12.8px 'Liberation Mono',monospace;line-height:12.8px;letter-spacing:1.12px;color:#000;">Off</div><div class="t" style="left:21px;top:633.1px;font:bold 11.6px 'Liberation Mono',monospace;line-height:11.6px;letter-spacing:1.04px;color:#000;">N-TCal En.</div><div class="t" style="left:119.5px;top:635.2px;font:12.8px 'Liberation Mono',monospace;line-height:12.8px;letter-spacing:1.12px;color:#000;">Off</div><div class="t" style="left:21px;top:651.1px;font:bold 11.6px 'Liberation Mono',monospace;line-height:11.6px;letter-spacing:1.04px;color:#000;">C-TCal En.</div><div class="t" style="left:119.5px;top:653.2px;font:12.8px 'Liberation Mono',monospace;line-height:12.8px;letter-spacing:1.12px;color:#000;">Off</div><div style="left:119px;top:647px;width:27px;height:1px;background:#fff;"></div><div class="t" style="left:21px;top:668.1px;font:bold 11.6px 'Liberation Mono',monospace;line-height:11.6px;letter-spacing:1.04px;color:#000;">EOUT1 Level</div><div class="t" style="left:136px;top:669.1px;font:bold 14px 'Liberation Sans',sans-serif;line-height:14px;color:#FF0000;transform:scaleX(0.9);transform-origin:0 0;">0</div><div class="t" style="left:21px;top:685.1px;font:bold 11.6px 'Liberation Mono',monospace;line-height:11.6px;letter-spacing:1.04px;color:#000;">EOUT2 Level</div><div class="t" style="left:136px;top:686.1px;font:bold 14px 'Liberation Sans',sans-serif;line-height:14px;color:#FF0000;transform:scaleX(0.9);transform-origin:0 0;">0</div><div class="t" style="left:21px;top:704.1px;font:bold 11.6px 'Liberation Mono',monospace;line-height:11.6px;letter-spacing:1.04px;color:#000;">Discr. Level</div><div class="t" style="left:160px;top:581.1px;font:bold 11.6px 'Liberation Mono',monospace;line-height:11.6px;letter-spacing:1.04px;color:#000;">SW Ver:</div><div class="t" style="left:218px;top:581.1px;font:11.6px 'Liberation Mono',monospace;line-height:11.6px;letter-spacing:1.04px;color:#FF0000;">--</div><div class="t" style="left:236px;top:581.1px;font:bold 11.6px 'Liberation Mono',monospace;line-height:11.6px;letter-spacing:1.04px;color:#000;">.</div><div class="t" style="left:246px;top:581.1px;font:11.6px 'Liberation Mono',monospace;line-height:11.6px;letter-spacing:-0.96px;color:#FF0000;">----</div><div style="left:274px;top:578px;width:112px;height:15px;background:#0040C0;"></div><div class="t" style="left:274.5px;top:581.1px;font:11.6px 'Liberation Mono',monospace;line-height:11.6px;letter-spacing:0.04px;color:#fff;">Command Activity</div><div class="t" style="left:174.5px;top:600.1px;font:bold 11.6px 'Liberation Mono',monospace;line-height:11.6px;letter-spacing:1.04px;color:#000;">Valid Cmd Cnt</div><div class="t" style="left:330px;top:594.1px;font:bold 14px 'Liberation Sans',sans-serif;line-height:14px;color:#FF0000;transform:scaleX(0.9);transform-origin:0 0;">0</div><div class="t" style="left:362px;top:595.1px;font:bold 11.6px 'Liberation Mono',monospace;line-height:11.6px;letter-spacing:1.04px;color:#000;">CE Cnt</div><div class="t" style="left:425px;top:591.1px;font:bold 14px 'Liberation Sans',sans-serif;line-height:14px;color:#FF0000;transform:scaleX(0.9);transform-origin:0 0;">00</div><div class="t" style="left:175px;top:620.1px;font:bold 11.6px 'Liberation Mono',monospace;line-height:11.6px;letter-spacing:1.04px;color:#000;">Invalid Cmd Cnt</div><div class="t" style="left:313px;top:617.1px;font:bold 14px 'Liberation Sans',sans-serif;line-height:14px;color:#FF0000;transform:scaleX(0.9);transform-origin:0 0;">00</div><div class="t" style="left:207px;top:639.1px;font:bold 11.6px 'Liberation Mono',monospace;line-height:11.6px;letter-spacing:1.04px;color:#000;">Command Echo Data:</div><div style="left:207px;top:650px;width:143px;height:1px;background:#000;"></div><div style="left:350px;top:611px;width:99px;height:18px;background:#C6C6C6;border:1px solid #000;box-shadow:inset 2px 2px #fff,inset -2px -2px #808080;overflow:hidden;"><div class="t" style="left:26px;top:4.2px;font:12.8px 'Liberation Mono',monospace;line-height:12.8px;letter-spacing:1.12px;color:#000;">NOISY</div></div><div style="left:350px;top:630px;width:99px;height:18px;background:#C6C6C6;border:1px solid #000;box-shadow:inset 2px 2px #fff,inset -2px -2px #808080;overflow:hidden;"><div class="t" style="left:26px;top:3.2px;font:12.8px 'Liberation Mono',monospace;line-height:12.8px;letter-spacing:1.12px;color:#000;">QUIET</div></div><div style="left:165px;top:655px;width:272px;height:60px;background:#fff;"></div><div class="t" style="left:167px;top:656.4px;font:12.5px 'Liberation Mono',monospace;line-height:12.5px;letter-spacing:0.50px;color:#000;">0000 0000 0000 0000 0000 0000 0000</div><div class="t" style="left:167px;top:669.3px;font:12.5px 'Liberation Mono',monospace;line-height:12.5px;letter-spacing:0.50px;color:#000;">0000 0000 0000 0000 0000 0000 0000</div><div class="t" style="left:167px;top:682.2px;font:12.5px 'Liberation Mono',monospace;line-height:12.5px;letter-spacing:0.50px;color:#000;">0000 0000 0000 0000 0000 0000 0000</div><div class="t" style="left:167px;top:695.1px;font:12.5px 'Liberation Mono',monospace;line-height:12.5px;letter-spacing:0.50px;color:#000;">0000 0000 0000 0000 0000 0000 0000</div><div class="win" style="left:646px;top:325px;width:225px;height:277px;"></div><div class="tb" style="left:650px;top:329px;width:217px;height:18px;background:#A28D68;"></div><svg width="16" height="16" style="left:652px;top:330px" shape-rendering="crispEdges"><rect width="16" height="16" fill="#B4BAC4"/><rect width="15" height="15" fill="#E6DFD0"/><rect x="1" y="1" width="14" height="14" fill="#ABABAB"/><rect x="3" y="2" width="2" height="1" fill="#1048D8"/><rect x="2" y="3" width="1" height="1" fill="#1048D8"/><rect x="4" y="3" width="2" height="1" fill="#1048D8"/><rect x="3" y="4" width="2" height="1" fill="#1048D8"/><rect x="5" y="3" width="1" height="2" fill="#1048D8"/><rect x="7" y="2" width="1" height="3" fill="#1048D8"/><rect x="8" y="3" width="1" height="2" fill="#1048D8"/><rect x="9" y="2" width="1" height="3" fill="#1048D8"/><rect x="10" y="3" width="1" height="2" fill="#1048D8"/><rect x="11" y="3" width="2" height="2" fill="#1048D8"/><rect x="12" y="2" width="1" height="1" fill="#1048D8"/><rect x="2" y="6" width="7" height="2" fill="#3A3A18"/><rect x="2" y="8" width="1" height="1" fill="#3A3A18"/><rect x="4" y="8" width="1" height="1" fill="#3A3A18"/><rect x="7" y="8" width="2" height="1" fill="#3A3A18"/><rect x="2" y="10" width="4" height="2" fill="#3A3A18"/><rect x="3" y="12" width="2" height="1" fill="#3A3A18"/><rect x="8" y="10" width="3" height="1" fill="#FF0000"/><rect x="8" y="11" width="2" height="1" fill="#FF0000"/><rect x="8" y="12" width="1" height="1" fill="#FF0000"/><rect x="12" y="10" width="1" height="2" fill="#FF0000"/></svg><div class="t" style="left:671px;top:332px;font:bold 12px 'Liberation Sans',sans-serif;line-height:12px;letter-spacing:-0.48px;color:#fff;">Power Commands</div><div class="cb" style="left:849px;top:331px;width:16px;height:14px;"><svg width="16" height="14"><path d="M4.5 3.5 L11.5 10.5 M11.5 3.5 L4.5 10.5" stroke="#000" stroke-width="1.6" fill="none"/></svg></div><div class="cb" style="left:831px;top:331px;width:16px;height:14px;"><div style="left:3px;top:2px;width:9px;height:9px;border:1px solid #000;border-top:2px solid #000"></div></div><div class="cb" style="left:815px;top:331px;width:16px;height:14px;"><div style="left:4px;top:9px;width:6px;height:2px;background:#000"></div></div><div style="left:650px;top:348px;width:217px;height:250px;background:#000;"></div><div style="left:651px;top:349px;width:216px;height:26px;background:#FF0000;"></div><div style="left:651px;top:376px;width:216px;height:222px;background:#0040C0;"></div><div style="left:656px;top:353px;width:102px;height:19px;background:#C6C6C6;border:1px solid #000;box-shadow:inset 2px 2px #fff,inset -2px -2px #808080;"></div><div class="t" style="left:656px;top:358.5px;font:11px 'Liberation Sans',sans-serif;line-height:11px;letter-spacing:-0.53px;color:#000;width:102px;text-align:center;">MIMI OFF</div><div style="left:763px;top:353px;width:102px;height:19px;background:#C6C6C6;border:1px solid #000;box-shadow:inset 2px 2px #fff,inset -2px -2px #808080;"></div><div class="t" style="left:763px;top:358.5px;font:11px 'Liberation Sans',sans-serif;line-height:11px;letter-spacing:-0.53px;color:#000;width:102px;text-align:center;">MIMI ON</div><div style="left:655px;top:378px;width:102px;height:20px;background:#C6C6C6;border:1px solid #000;box-shadow:inset 2px 2px #fff,inset -2px -2px #808080;"></div><div class="t" style="left:655px;top:383.5px;font:11px 'Liberation Sans',sans-serif;line-height:11px;letter-spacing:-0.55px;color:#000;width:102px;text-align:center;">CHEMS Proc OFF</div><div style="left:762px;top:378px;width:102px;height:20px;background:#C6C6C6;border:1px solid #000;box-shadow:inset 2px 2px #fff,inset -2px -2px #808080;"></div><div class="t" style="left:762px;top:383.5px;font:11px 'Liberation Sans',sans-serif;line-height:11px;letter-spacing:-0.56px;color:#000;width:102px;text-align:center;">CHEMS Proc ON</div><div style="left:655px;top:403px;width:102px;height:20px;background:#C6C6C6;border:1px solid #000;box-shadow:inset 2px 2px #fff,inset -2px -2px #808080;"></div><div class="t" style="left:655px;top:408.5px;font:11px 'Liberation Sans',sans-serif;line-height:11px;letter-spacing:-0.58px;color:#000;width:102px;text-align:center;">CHEMS Amps OFF</div><div style="left:762px;top:403px;width:102px;height:20px;background:#C6C6C6;border:1px solid #000;box-shadow:inset 2px 2px #fff,inset -2px -2px #808080;"></div><div class="t" style="left:762px;top:408.5px;font:11px 'Liberation Sans',sans-serif;line-height:11px;letter-spacing:-0.59px;color:#000;width:102px;text-align:center;">CHEMS Amps ON</div><div style="left:655px;top:427px;width:102px;height:20px;background:#C6C6C6;border:1px solid #000;box-shadow:inset 2px 2px #fff,inset -2px -2px #808080;"></div><div class="t" style="left:655px;top:432.5px;font:11px 'Liberation Sans',sans-serif;line-height:11px;letter-spacing:-0.50px;color:#000;width:102px;text-align:center;">INCA Proc OFF</div><div style="left:762px;top:427px;width:102px;height:20px;background:#C6C6C6;border:1px solid #000;box-shadow:inset 2px 2px #fff,inset -2px -2px #808080;"></div><div class="t" style="left:762px;top:432.5px;font:11px 'Liberation Sans',sans-serif;line-height:11px;letter-spacing:-0.51px;color:#000;width:102px;text-align:center;">INCA Proc ON</div><div style="left:655px;top:452px;width:102px;height:20px;background:#C6C6C6;border:1px solid #000;box-shadow:inset 2px 2px #fff,inset -2px -2px #808080;"></div><div class="t" style="left:655px;top:457.5px;font:11px 'Liberation Sans',sans-serif;line-height:11px;letter-spacing:-0.54px;color:#000;width:102px;text-align:center;">INCA Amps OFF</div><div style="left:762px;top:452px;width:102px;height:20px;background:#C6C6C6;border:1px solid #000;box-shadow:inset 2px 2px #fff,inset -2px -2px #808080;"></div><div class="t" style="left:762px;top:457.5px;font:11px 'Liberation Sans',sans-serif;line-height:11px;letter-spacing:-0.55px;color:#000;width:102px;text-align:center;">INCA Amps ON</div><div style="left:655px;top:476px;width:102px;height:20px;background:#C6C6C6;border:1px solid #000;box-shadow:inset 2px 2px #fff,inset -2px -2px #808080;"></div><div class="t" style="left:655px;top:481.5px;font:11px 'Liberation Sans',sans-serif;line-height:11px;letter-spacing:-0.54px;color:#000;width:102px;text-align:center;">LEMMS Sensor OFF</div><div style="left:762px;top:476px;width:102px;height:20px;background:#C6C6C6;border:1px solid #000;box-shadow:inset 2px 2px #fff,inset -2px -2px #808080;"></div><div class="t" style="left:762px;top:481.5px;font:11px 'Liberation Sans',sans-serif;line-height:11px;letter-spacing:-0.55px;color:#000;width:102px;text-align:center;">LEMMS Sensor ON</div><div style="left:655px;top:501px;width:102px;height:20px;background:#C6C6C6;border:1px solid #000;box-shadow:inset 2px 2px #fff,inset -2px -2px #808080;"></div><div class="t" style="left:655px;top:506.5px;font:11px 'Liberation Sans',sans-serif;line-height:11px;letter-spacing:-0.54px;color:#000;width:102px;text-align:center;">LEMMS Motor OFF</div><div style="left:762px;top:501px;width:102px;height:20px;background:#C6C6C6;border:1px solid #000;box-shadow:inset 2px 2px #fff,inset -2px -2px #808080;"></div><div class="t" style="left:762px;top:506.5px;font:11px 'Liberation Sans',sans-serif;line-height:11px;letter-spacing:-0.55px;color:#000;width:102px;text-align:center;">LEMMS Motor ON</div><div style="left:655px;top:526px;width:102px;height:20px;background:#C6C6C6;border:1px solid #000;box-shadow:inset 2px 2px #fff,inset -2px -2px #808080;"></div><div class="t" style="left:655px;top:531.5px;font:11px 'Liberation Sans',sans-serif;line-height:11px;letter-spacing:-0.60px;color:#000;width:102px;text-align:center;">CHEMS MCP OFF</div><div style="left:762px;top:526px;width:102px;height:20px;background:#C6C6C6;border:1px solid #000;box-shadow:inset 2px 2px #fff,inset -2px -2px #808080;"></div><div class="t" style="left:762px;top:531.5px;font:11px 'Liberation Sans',sans-serif;line-height:11px;letter-spacing:-0.61px;color:#000;width:102px;text-align:center;">CHEMS MCP ON</div><div style="left:655px;top:550px;width:102px;height:20px;background:#C6C6C6;border:1px solid #000;box-shadow:inset 2px 2px #fff,inset -2px -2px #808080;"></div><div class="t" style="left:655px;top:555.5px;font:11px 'Liberation Sans',sans-serif;line-height:11px;letter-spacing:-0.59px;color:#000;width:102px;text-align:center;">CHEMS DPPS OFF</div><div style="left:762px;top:550px;width:102px;height:20px;background:#C6C6C6;border:1px solid #000;box-shadow:inset 2px 2px #fff,inset -2px -2px #808080;"></div><div class="t" style="left:762px;top:555.5px;font:11px 'Liberation Sans',sans-serif;line-height:11px;letter-spacing:-0.60px;color:#000;width:102px;text-align:center;">CHEMS DPPS ON</div><div style="left:655px;top:575px;width:102px;height:20px;background:#C6C6C6;border:1px solid #000;box-shadow:inset 2px 2px #fff,inset -2px -2px #808080;"></div><div class="t" style="left:655px;top:580.5px;font:11px 'Liberation Sans',sans-serif;line-height:11px;letter-spacing:-0.54px;color:#000;width:102px;text-align:center;">INCA HV OFF</div><div style="left:762px;top:575px;width:102px;height:20px;background:#C6C6C6;border:1px solid #000;box-shadow:inset 2px 2px #fff,inset -2px -2px #808080;"></div><div class="t" style="left:762px;top:580.5px;font:11px 'Liberation Sans',sans-serif;line-height:11px;letter-spacing:-0.55px;color:#000;width:102px;text-align:center;">INCA HV ON</div><div class="win" style="left:704px;top:603px;width:160px;height:24px;"></div><div style="left:707px;top:606px;width:154px;height:18px;background:#A28D68;"></div><svg width="16" height="16" style="left:709px;top:607px" shape-rendering="crispEdges"><rect width="16" height="16" fill="#B4BAC4"/><rect width="15" height="15" fill="#E6DFD0"/><rect x="1" y="1" width="14" height="14" fill="#ABABAB"/><rect x="3" y="2" width="2" height="1" fill="#1048D8"/><rect x="2" y="3" width="1" height="1" fill="#1048D8"/><rect x="4" y="3" width="2" height="1" fill="#1048D8"/><rect x="3" y="4" width="2" height="1" fill="#1048D8"/><rect x="5" y="3" width="1" height="2" fill="#1048D8"/><rect x="7" y="2" width="1" height="3" fill="#1048D8"/><rect x="8" y="3" width="1" height="2" fill="#1048D8"/><rect x="9" y="2" width="1" height="3" fill="#1048D8"/><rect x="10" y="3" width="1" height="2" fill="#1048D8"/><rect x="11" y="3" width="2" height="2" fill="#1048D8"/><rect x="12" y="2" width="1" height="1" fill="#1048D8"/><rect x="2" y="6" width="7" height="2" fill="#3A3A18"/><rect x="2" y="8" width="1" height="1" fill="#3A3A18"/><rect x="4" y="8" width="1" height="1" fill="#3A3A18"/><rect x="7" y="8" width="2" height="1" fill="#3A3A18"/><rect x="2" y="10" width="4" height="2" fill="#3A3A18"/><rect x="3" y="12" width="2" height="1" fill="#3A3A18"/><rect x="8" y="10" width="3" height="1" fill="#FF0000"/><rect x="8" y="11" width="2" height="1" fill="#FF0000"/><rect x="8" y="12" width="1" height="1" fill="#FF0000"/><rect x="12" y="10" width="1" height="2" fill="#FF0000"/></svg><div class="t" style="left:728px;top:609px;font:bold 12px 'Liberation Sans',sans-serif;line-height:12px;letter-spacing:0.05px;color:#fff;">INCASenso...</div><div class="cb" style="left:809px;top:608px;width:16px;height:14px;"><div style="left:5px;top:2px;width:6px;height:6px;border:1px solid #000;border-top:2px solid #000"></div><div style="left:3px;top:5px;width:6px;height:6px;border:1px solid #000;border-top:2px solid #000;background:#D5CCBB"></div></div><div class="cb" style="left:825px;top:608px;width:16px;height:14px;"><div style="left:3px;top:2px;width:9px;height:9px;border:1px solid #000;border-top:2px solid #000"></div></div><div class="cb" style="left:843px;top:608px;width:16px;height:14px;"><svg width="16" height="14"><path d="M4.5 3.5 L11.5 10.5 M11.5 3.5 L4.5 10.5" stroke="#000" stroke-width="1.6" fill="none"/></svg></div><div class="win" style="left:705px;top:630px;width:160px;height:24px;"></div><div style="left:708px;top:633px;width:154px;height:18px;background:#A28D68;"></div><svg width="16" height="16" style="left:710px;top:634px" shape-rendering="crispEdges"><rect width="16" height="16" fill="#B4BAC4"/><rect width="15" height="15" fill="#E6DFD0"/><rect x="1" y="1" width="14" height="14" fill="#ABABAB"/><rect x="3" y="2" width="2" height="1" fill="#1048D8"/><rect x="2" y="3" width="1" height="1" fill="#1048D8"/><rect x="4" y="3" width="2" height="1" fill="#1048D8"/><rect x="3" y="4" width="2" height="1" fill="#1048D8"/><rect x="5" y="3" width="1" height="2" fill="#1048D8"/><rect x="7" y="2" width="1" height="3" fill="#1048D8"/><rect x="8" y="3" width="1" height="2" fill="#1048D8"/><rect x="9" y="2" width="1" height="3" fill="#1048D8"/><rect x="10" y="3" width="1" height="2" fill="#1048D8"/><rect x="11" y="3" width="2" height="2" fill="#1048D8"/><rect x="12" y="2" width="1" height="1" fill="#1048D8"/><rect x="2" y="6" width="7" height="2" fill="#3A3A18"/><rect x="2" y="8" width="1" height="1" fill="#3A3A18"/><rect x="4" y="8" width="1" height="1" fill="#3A3A18"/><rect x="7" y="8" width="2" height="1" fill="#3A3A18"/><rect x="2" y="10" width="4" height="2" fill="#3A3A18"/><rect x="3" y="12" width="2" height="1" fill="#3A3A18"/><rect x="8" y="10" width="3" height="1" fill="#FF0000"/><rect x="8" y="11" width="2" height="1" fill="#FF0000"/><rect x="8" y="12" width="1" height="1" fill="#FF0000"/><rect x="12" y="10" width="1" height="2" fill="#FF0000"/></svg><div class="t" style="left:729px;top:636px;font:bold 12px 'Liberation Sans',sans-serif;line-height:12px;letter-spacing:0.15px;color:#fff;">CHEMS Se...</div><div class="cb" style="left:810px;top:635px;width:16px;height:14px;"><div style="left:5px;top:2px;width:6px;height:6px;border:1px solid #000;border-top:2px solid #000"></div><div style="left:3px;top:5px;width:6px;height:6px;border:1px solid #000;border-top:2px solid #000;background:#D5CCBB"></div></div><div class="cb" style="left:826px;top:635px;width:16px;height:14px;"><div style="left:3px;top:2px;width:9px;height:9px;border:1px solid #000;border-top:2px solid #000"></div></div><div class="cb" style="left:844px;top:635px;width:16px;height:14px;"><svg width="16" height="14"><path d="M4.5 3.5 L11.5 10.5 M11.5 3.5 L4.5 10.5" stroke="#000" stroke-width="1.6" fill="none"/></svg></div><div class="win" style="left:705px;top:653px;width:160px;height:24px;"></div><div style="left:708px;top:656px;width:154px;height:18px;background:#A28D68;"></div><svg width="16" height="16" style="left:710px;top:657px" shape-rendering="crispEdges"><rect width="16" height="16" fill="#B4BAC4"/><rect width="15" height="15" fill="#E6DFD0"/><rect x="1" y="1" width="14" height="14" fill="#ABABAB"/><rect x="3" y="2" width="2" height="1" fill="#1048D8"/><rect x="2" y="3" width="1" height="1" fill="#1048D8"/><rect x="4" y="3" width="2" height="1" fill="#1048D8"/><rect x="3" y="4" width="2" height="1" fill="#1048D8"/><rect x="5" y="3" width="1" height="2" fill="#1048D8"/><rect x="7" y="2" width="1" height="3" fill="#1048D8"/><rect x="8" y="3" width="1" height="2" fill="#1048D8"/><rect x="9" y="2" width="1" height="3" fill="#1048D8"/><rect x="10" y="3" width="1" height="2" fill="#1048D8"/><rect x="11" y="3" width="2" height="2" fill="#1048D8"/><rect x="12" y="2" width="1" height="1" fill="#1048D8"/><rect x="2" y="6" width="7" height="2" fill="#3A3A18"/><rect x="2" y="8" width="1" height="1" fill="#3A3A18"/><rect x="4" y="8" width="1" height="1" fill="#3A3A18"/><rect x="7" y="8" width="2" height="1" fill="#3A3A18"/><rect x="2" y="10" width="4" height="2" fill="#3A3A18"/><rect x="3" y="12" width="2" height="1" fill="#3A3A18"/><rect x="8" y="10" width="3" height="1" fill="#FF0000"/><rect x="8" y="11" width="2" height="1" fill="#FF0000"/><rect x="8" y="12" width="1" height="1" fill="#FF0000"/><rect x="12" y="10" width="1" height="2" fill="#FF0000"/></svg><div class="t" style="left:729px;top:659px;font:bold 12px 'Liberation Sans',sans-serif;line-height:12px;letter-spacing:0.10px;color:#fff;">CASSINI At...</div><div class="cb" style="left:810px;top:658px;width:16px;height:14px;"><div style="left:5px;top:2px;width:6px;height:6px;border:1px solid #000;border-top:2px solid #000"></div><div style="left:3px;top:5px;width:6px;height:6px;border:1px solid #000;border-top:2px solid #000;background:#D5CCBB"></div></div><div class="cb" style="left:826px;top:658px;width:16px;height:14px;"><div style="left:3px;top:2px;width:9px;height:9px;border:1px solid #000;border-top:2px solid #000"></div></div><div class="cb" style="left:844px;top:658px;width:16px;height:14px;"><svg width="16" height="14"><path d="M4.5 3.5 L11.5 10.5 M11.5 3.5 L4.5 10.5" stroke="#000" stroke-width="1.6" fill="none"/></svg></div><div class="win" style="left:871px;top:320px;width:146px;height:400px;"></div><div class="tb" style="left:875px;top:324px;width:138px;height:18px;background:#A28D68;"></div><svg width="16" height="16" style="left:877px;top:325px" shape-rendering="crispEdges"><rect width="16" height="16" fill="#B4BAC4"/><rect width="15" height="15" fill="#E6DFD0"/><rect x="1" y="1" width="14" height="14" fill="#ABABAB"/><rect x="3" y="2" width="2" height="1" fill="#1048D8"/><rect x="2" y="3" width="1" height="1" fill="#1048D8"/><rect x="4" y="3" width="2" height="1" fill="#1048D8"/><rect x="3" y="4" width="2" height="1" fill="#1048D8"/><rect x="5" y="3" width="1" height="2" fill="#1048D8"/><rect x="7" y="2" width="1" height="3" fill="#1048D8"/><rect x="8" y="3" width="1" height="2" fill="#1048D8"/><rect x="9" y="2" width="1" height="3" fill="#1048D8"/><rect x="10" y="3" width="1" height="2" fill="#1048D8"/><rect x="11" y="3" width="2" height="2" fill="#1048D8"/><rect x="12" y="2" width="1" height="1" fill="#1048D8"/><rect x="2" y="6" width="7" height="2" fill="#3A3A18"/><rect x="2" y="8" width="1" height="1" fill="#3A3A18"/><rect x="4" y="8" width="1" height="1" fill="#3A3A18"/><rect x="7" y="8" width="2" height="1" fill="#3A3A18"/><rect x="2" y="10" width="4" height="2" fill="#3A3A18"/><rect x="3" y="12" width="2" height="1" fill="#3A3A18"/><rect x="8" y="10" width="3" height="1" fill="#FF0000"/><rect x="8" y="11" width="2" height="1" fill="#FF0000"/><rect x="8" y="12" width="1" height="1" fill="#FF0000"/><rect x="12" y="10" width="1" height="2" fill="#FF0000"/></svg><div class="t" style="left:896px;top:327px;font:bold 12px 'Liberation Sans',sans-serif;line-height:12px;letter-spacing:-0.85px;color:#fff;">Startup ...</div><div class="cb" style="left:995px;top:326px;width:16px;height:14px;"><svg width="16" height="14"><path d="M4.5 3.5 L11.5 10.5 M11.5 3.5 L4.5 10.5" stroke="#000" stroke-width="1.6" fill="none"/></svg></div><div class="cb" style="left:977px;top:326px;width:16px;height:14px;"><div style="left:3px;top:2px;width:9px;height:9px;border:1px solid #000;border-top:2px solid #000"></div></div><div class="cb" style="left:961px;top:326px;width:16px;height:14px;"><div style="left:4px;top:9px;width:6px;height:2px;background:#000"></div></div><div style="left:875px;top:343px;width:138px;height:380px;background:#000;"></div><div style="left:876px;top:344px;width:137px;height:380px;background:#fff;"></div><div style="left:880px;top:347px;width:126px;height:20px;background:#FF0000;border:1px solid #000;box-shadow:inset 2px 2px #fff,inset -2px -2px #808080;"></div><div class="t" style="left:880px;top:352.5px;font:11px 'Liberation Sans',sans-serif;line-height:11px;letter-spacing:-0.43px;color:#000;width:126px;text-align:center;">Start MIMI</div><div style="left:880px;top:367px;width:126px;height:20px;background:#FF0000;border:1px solid #000;box-shadow:inset 2px 2px #fff,inset -2px -2px #808080;"></div><div class="t" style="left:880px;top:372.5px;font:11px 'Liberation Sans',sans-serif;line-height:11px;letter-spacing:-0.47px;color:#000;width:126px;text-align:center;">Stop MIMI</div><div style="left:880px;top:388px;width:126px;height:20px;background:#C6C6C6;border:1px solid #000;box-shadow:inset 2px 2px #fff,inset -2px -2px #808080;"></div><div class="t" style="left:880px;top:393.5px;font:11px 'Liberation Sans',sans-serif;line-height:11px;letter-spacing:-0.56px;color:#000;width:126px;text-align:center;">RT SLEEP ON</div><div style="left:880px;top:409px;width:126px;height:20px;background:#C6C6C6;border:1px solid #000;box-shadow:inset 2px 2px #fff,inset -2px -2px #808080;"></div><div class="t" style="left:880px;top:414.5px;font:11px 'Liberation Sans',sans-serif;line-height:11px;letter-spacing:-0.55px;color:#000;width:126px;text-align:center;">RT SLEEP OFF</div><div style="left:880px;top:430px;width:126px;height:20px;background:#C6C6C6;border:1px solid #000;box-shadow:inset 2px 2px #fff,inset -2px -2px #808080;"></div><div class="t" style="left:880px;top:435.5px;font:11px 'Liberation Sans',sans-serif;line-height:11px;letter-spacing:-0.45px;color:#000;width:126px;text-align:center;">Reload Cpd Files</div><div style="left:880px;top:451px;width:126px;height:20px;background:#C6C6C6;border:1px solid #000;box-shadow:inset 2px 2px #fff,inset -2px -2px #808080;"></div><div class="t" style="left:880px;top:456.5px;font:11px 'Liberation Sans',sans-serif;line-height:11px;letter-spacing:-0.62px;color:#000;width:126px;text-align:center;">Command</div><div style="left:880px;top:471.5px;width:126px;height:20px;background:#C6C6C6;border:1px solid #000;box-shadow:inset 2px 2px #fff,inset -2px -2px #808080;"></div><div class="t" style="left:880px;top:477.0px;font:11px 'Liberation Sans',sans-serif;line-height:11px;letter-spacing:-0.51px;color:#000;width:126px;text-align:center;">Transmit Command</div><div style="left:880px;top:492px;width:126px;height:20px;background:#C6C6C6;border:1px solid #000;box-shadow:inset 2px 2px #fff,inset -2px -2px #808080;"></div><div class="t" style="left:880px;top:497.5px;font:11px 'Liberation Sans',sans-serif;line-height:11px;letter-spacing:-0.53px;color:#000;width:126px;text-align:center;">Receive Command</div><div style="left:880px;top:512px;width:126px;height:19.5px;background:#C6C6C6;border:1px solid #000;box-shadow:inset 2px 2px #fff,inset -2px -2px #808080;"></div><div class="t" style="left:880px;top:517.5px;font:11px 'Liberation Sans',sans-serif;line-height:11px;letter-spacing:-0.46px;color:#000;width:126px;text-align:center;">Transmit Command At...</div><div style="left:880px;top:531.5px;width:126px;height:20px;background:#C6C6C6;border:1px solid #000;box-shadow:inset 2px 2px #fff,inset -2px -2px #808080;"></div><div class="t" style="left:880px;top:537.0px;font:11px 'Liberation Sans',sans-serif;line-height:11px;letter-spacing:-0.47px;color:#000;width:126px;text-align:center;">Receive Command At...</div><div style="left:880px;top:552px;width:126px;height:20px;background:#C6C6C6;border:1px solid #000;box-shadow:inset 2px 2px #fff,inset -2px -2px #808080;"></div><div class="t" style="left:880px;top:557.5px;font:11px 'Liberation Sans',sans-serif;line-height:11px;letter-spacing:-0.47px;color:#000;width:126px;text-align:center;">Data Upload</div><div style="left:880px;top:572px;width:126px;height:20px;background:#C6C6C6;border:1px solid #000;box-shadow:inset 2px 2px #fff,inset -2px -2px #808080;"></div><div class="t" style="left:880px;top:577.5px;font:11px 'Liberation Sans',sans-serif;line-height:11px;letter-spacing:-0.47px;color:#000;width:126px;text-align:center;">Reload cpd</div><div style="left:880px;top:593px;width:126px;height:20px;background:#C6C6C6;border:1px solid #000;box-shadow:inset 2px 2px #fff,inset -2px -2px #808080;"></div><div class="t" style="left:880px;top:598.5px;font:11px 'Liberation Sans',sans-serif;line-height:11px;letter-spacing:-0.50px;color:#000;width:126px;text-align:center;">RT HV Enable</div><div style="left:880px;top:613px;width:126px;height:20px;background:#C6C6C6;border:1px solid #000;box-shadow:inset 2px 2px #fff,inset -2px -2px #808080;"></div><div class="t" style="left:880px;top:618.5px;font:11px 'Liberation Sans',sans-serif;line-height:11px;letter-spacing:-0.47px;color:#000;width:126px;text-align:center;">RT HV Disable</div><div style="left:880px;top:634px;width:126px;height:20px;background:#C6C6C6;border:1px solid #000;box-shadow:inset 2px 2px #fff,inset -2px -2px #808080;"></div><div class="t" style="left:880px;top:639.5px;font:11px 'Liberation Sans',sans-serif;line-height:11px;letter-spacing:-0.51px;color:#000;width:126px;text-align:center;">RT DPU Reset</div><div style="left:880px;top:654px;width:126px;height:20px;background:#C6C6C6;border:1px solid #000;box-shadow:inset 2px 2px #fff,inset -2px -2px #808080;"></div><div class="t" style="left:880px;top:659.5px;font:11px 'Liberation Sans',sans-serif;line-height:11px;letter-spacing:-0.51px;color:#000;width:126px;text-align:center;">RT DPU Release</div><div style="left:880px;top:674px;width:126px;height:20px;background:#C6C6C6;border:1px solid #000;box-shadow:inset 2px 2px #fff,inset -2px -2px #808080;"></div><div class="t" style="left:880px;top:679.5px;font:11px 'Liberation Sans',sans-serif;line-height:11px;letter-spacing:-0.51px;color:#000;width:126px;text-align:center;">Reset BIU WD</div><div style="left:880px;top:694px;width:126px;height:20px;background:#C6C6C6;border:1px solid #000;box-shadow:inset 2px 2px #fff,inset -2px -2px #808080;"></div><div class="t" style="left:880px;top:699.5px;font:11px 'Liberation Sans',sans-serif;line-height:11px;letter-spacing:-0.47px;color:#FF0000;width:126px;text-align:center;">Reset/Disable BIU WD</div></div><div style="left:1011px;top:65px;width:13px;height:640px;background:#EFE7DD;"></div><div style="left:1011px;top:65px;width:13px;height:13px;background:#D5CCBB;box-shadow:inset 1px 1px #F3EFE8,inset -1px -1px #000,inset -2px -2px #A28D68;"><svg width="13" height="13"><path d="M3 8 L9 8 L6 4.5Z" fill="#000"/></svg></div><div style="left:1011px;top:692px;width:13px;height:13px;background:#D5CCBB;box-shadow:inset 1px 1px #F3EFE8,inset -1px -1px #000,inset -2px -2px #A28D68;"><svg width="13" height="13"><path d="M3 5 L9 5 L6 8.5Z" fill="#000"/></svg></div><div style="left:1011px;top:78px;width:13px;height:513px;background:#D5CCBB;box-shadow:inset 1px 1px #F8F4EE,inset -1px -1px #000,inset -2px -2px #A28D68;"></div><div style="left:0px;top:705px;width:1011px;height:13px;background:#EFE7DD;"></div><div style="left:0px;top:705px;width:13px;height:13px;background:#D5CCBB;box-shadow:inset 1px 1px #F3EFE8,inset -1px -1px #000,inset -2px -2px #A28D68;"><svg width="13" height="13"><path d="M8 3 L8 9 L4.5 6Z" fill="#000"/></svg></div><div style="left:998px;top:705px;width:13px;height:13px;background:#D5CCBB;box-shadow:inset 1px 1px #F3EFE8,inset -1px -1px #000,inset -2px -2px #A28D68;"><svg width="13" height="13"><path d="M5 3 L5 9 L8.5 6Z" fill="#000"/></svg></div><div style="left:13px;top:705px;width:938px;height:13px;background:#D5CCBB;box-shadow:inset 1px 1px #F8F4EE,inset -1px -1px #000,inset -2px -2px #A28D68;"></div><div style="left:1011px;top:705px;width:13px;height:13px;background:#D5CCBB;"></div><div style="left:0px;top:718px;width:1024px;height:1px;background:#000;"></div><div style="left:0px;top:719px;width:1024px;height:23px;background:#D5CCBB;"></div><div class="sunk" style="left:8px;top:721px;width:797px;height:18px;background:#D5CCBB;"></div><div class="sunk" style="left:807px;top:721px;width:209px;height:18px;background:#D5CCBB;"></div><div class="t" style="left:13px;top:724px;font:13.33px 'Liberation Sans',sans-serif;line-height:13.33px;letter-spacing:-0.31px;">StartMIMI</div><div class="t" style="left:811px;top:724px;font:13.33px 'Liberation Sans',sans-serif;line-height:13.33px;letter-spacing:-0.01px;">Not in recording mode</div><div style="left:0px;top:741px;width:1024px;height:27px;background:#D5CCBB;box-shadow:inset 0 1px #F3EFE8;"></div><div class="task" style="left:2px;top:744px;width:54px;height:22px;"></div><svg width="18" height="17" style="left:6px;top:747px"><path d="M6 3 Q9 1 12 3 Q15 5 17 3 V13 Q15 15 12 13 Q9 11 6 13Z" fill="#000"/><path d="M7 4 Q9 3 11 4.500 V8 Q9 6.500 7 7.500Z" fill="#F00000"/><path d="M12 5 Q14 6 16 5 V8.500 Q14 9.500 12 8.500Z" fill="#00C000"/><path d="M7 8.500 Q9 7.500 11 9 V12 Q9 10.500 7 11.500Z" fill="#0040F0"/><path d="M12 9.500 Q14 10.500 16 9.500 V12.500 Q14 13.500 12 12.500Z" fill="#F0E000"/><path d="M1 5 H2 M3 5 H5 M1 7 H2 M3 7 H5 M1 9 H2 M3 9 H5 M1 11 H2 M3 11 H5" stroke="#000"/><path d="M3 6 H5" stroke="#F00"/><path d="M3 10 H5" stroke="#00F"/></svg><div class="t" style="left:24.5px;top:749px;font:bold 12.5px 'Liberation Sans',sans-serif;line-height:12.5px;transform-origin:0 0;transform:scaleX(0.948);">Start</div><div class="task" style="left:60px;top:744px;width:142px;height:22px;"></div><svg width="18" height="17" style="left:64px;top:747px"><rect x="1" y="1" width="7" height="5" fill="#00E0E0" stroke="#404040"/><rect x="0" y="7" width="9" height="1.500" fill="#808080"/><rect x="1" y="9" width="7" height="5" fill="#00E0E0" stroke="#404040"/><rect x="0" y="15" width="9" height="1.500" fill="#808080"/><rect x="0" y="15" width="2" height="1" fill="#00C000"/><rect x="0" y="7" width="2" height="1" fill="#00C000"/><path d="M8 4 L12 7 M8 12 L11 10" stroke="#2050C0"/><rect x="10" y="5" width="6" height="4" fill="#E8E000" stroke="#404040"/><rect x="10" y="9" width="6" height="3" fill="#808080"/><path d="M9 14 q1 2 2 0 q1 2 2 0 q1 2 2 0 V11" fill="none" stroke="#2050C0"/></svg><div class="t" style="left:82px;top:749px;font:12.5px 'Liberation Sans',sans-serif;line-height:12.5px;transform-origin:0 0;transform:scaleX(0.817);">GTE</div><div class="task" style="left:206px;top:744px;width:142px;height:22px;"></div><svg width="18" height="17" style="left:210px;top:747px"><rect x="0" y="1" width="16" height="14" fill="#102080"/><rect x="0" y="1" width="16" height="3" fill="#C02020"/><path d="M2 12 L6 4 L13 6 L9 9 L13 12 L8 11Z" fill="#fff"/><path d="M3 14 H8 M10 14 H14" stroke="#40C0FF" stroke-width="2"/><rect x="0" y="1" width="16" height="14" fill="none" stroke="#000" stroke-width=".5"/></svg><div class="t" style="left:228.7px;top:749px;font:12.5px 'Liberation Sans',sans-serif;line-height:12.5px;transform-origin:0 0;transform:scaleX(0.818);">Borland C++ - mimi - [c:...</div><div class="task" style="left:352px;top:744px;width:142px;height:22px;"></div><svg width="18" height="17" style="left:356px;top:747px"><path d="M1 4 L2 2 H7 L8 4 H14 V14 H1Z" fill="#F0E040" stroke="#605000"/><circle cx="8" cy="8" r="3.500" fill="#60E0F0" stroke="#000"/><path d="M10.500 10.500 L15 15" stroke="#000" stroke-width="2.200"/></svg><div class="t" style="left:375px;top:749px;font:12.5px 'Liberation Sans',sans-serif;line-height:12.5px;transform-origin:0 0;transform:scaleX(0.834);">Exploring - C:\TEMP</div><div class="task" style="left:498px;top:744px;width:142px;height:22px;"></div><svg width="18" height="17" style="left:502px;top:747px"><rect x="0" y="0" width="16" height="16" fill="#102070"/><path d="M1 13 L4 7 L6 10 L8 3 L10 10 L12 6 L15 13Z" fill="#3060D0"/><path d="M1 14 H15" stroke="#80A0F0" stroke-dasharray="2 1"/><rect x="0" y="0" width="16" height="16" fill="none" stroke="#000" stroke-width=".6"/></svg><div class="t" style="left:520.6px;top:749px;font:12.5px 'Liberation Sans',sans-serif;line-height:12.5px;transform-origin:0 0;transform:scaleX(0.852);">Netscape - [GSEOS 3.4]</div><div style="left:644px;top:744px;width:142px;height:22px;background:#EEE9E0;box-shadow:inset 1px 1px #000,inset -1px -1px #F3EFE8,inset 2px 2px #A28D68;"></div><svg width="18" height="17" style="left:648px;top:748px"><g transform="translate(-2,-2)"><path d="M3 2.5 L6.5 2.5 L15 11 L15 13.5 L12 13.5 L3 4.5Z" fill="#D8D4CC" stroke="#000" stroke-width="1"/><path d="M3.5 5.5 L10.5 13 L9.5 14.5 L6 14.5 L3.5 11.5Z" fill="#505028" stroke="#000" stroke-width=".8"/><path d="M4 9 L8 13.5 M4 11.5 L6.5 14" stroke="#000" stroke-width="1"/><path d="M9.5 6.5 L12 4" stroke="#000" stroke-width="2.4"/><circle cx="11.6" cy="4.4" r=".8" fill="#fff"/><path d="M3 16 H13.500" stroke="#000" stroke-width="2"/><path d="M4 15.700 H12" stroke="#505028" stroke-width=".8"/><rect x="6.700" y="13.700" width="1.600" height="1.600" fill="#00FF00"/><rect x="3.800" y="6.800" width="1.500" height="1.500" fill="#FF0000"/></g></svg><div class="t" style="left:666.6px;top:750px;font:bold 12.5px 'Liberation Sans',sans-serif;line-height:12.5px;transform-origin:0 0;transform:scaleX(0.937);">Mimi [1] - Bios</div><div class="task" style="left:790px;top:744px;width:142px;height:22px;"></div><svg width="18" height="17" style="left:794px;top:747px"><path d="M2 3 H12 V14 H2Z" fill="#fff" stroke="#000"/><path d="M3 12 L8 7" stroke="#00A000" stroke-width="2"/><circle cx="6" cy="7" r="2.500" fill="#E00000"/><path d="M8 10 L15 3" stroke="#2040E0" stroke-width="2.500"/></svg><div class="t" style="left:812px;top:749px;font:12.5px 'Liberation Sans',sans-serif;line-height:12.5px;transform-origin:0 0;transform:scaleX(0.845);">untitled - Paint</div><div class="sunk" style="left:941px;top:744px;width:80px;height:22px;background:#D5CCBB;"></div><svg width="20" height="18" style="left:948px;top:746px"><rect x="1" y="2" width="13" height="12" fill="#fff" stroke="#404040"/><rect x="1" y="2" width="13" height="3" fill="#2040D0"/><text x="1" y="7" font-family="Liberation Sans,sans-serif" font-size="6" font-weight="bold" fill="#2040D0"></text><path d="M1 14.500 H10" stroke="#000"/><circle cx="12" cy="13" r="4" fill="#fff" stroke="#E00000" stroke-width="1.600"/><circle cx="12" cy="13" r="5" fill="none" stroke="#304010" stroke-width=".6"/><path d="M12 11 V13 H14" stroke="#2040D0" fill="none"/></svg><div class="t" style="left:969px;top:749px;font:12.5px 'Liberation Sans',sans-serif;line-height:12.5px;transform-origin:0 0;transform:scaleX(0.832);">12:19 AM</div></body></html>
